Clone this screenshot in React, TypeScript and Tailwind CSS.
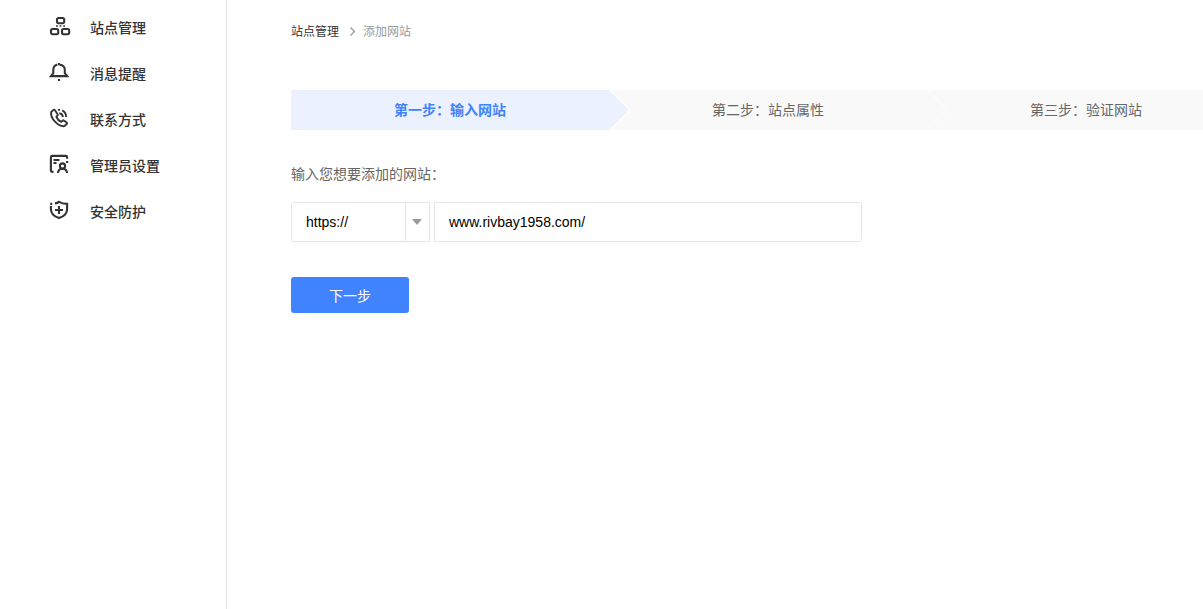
import type { ReactNode } from "react";

function Icon({ children }: { children: ReactNode }) {
  return (
    <svg
      width="24"
      height="24"
      viewBox="0 0 24 24"
      fill="none"
      stroke="#333"
      strokeWidth="2.1"
      className="shrink-0"
    >
      {children}
    </svg>
  );
}

const SitesIcon = () => (
  <Icon>
    <rect x="9" y="4" width="7.200" height="5.200" rx="1.600" />
    <rect x="3" y="15" width="7.200" height="5.200" rx="1.600" />
    <rect x="14" y="15" width="7.200" height="5.200" rx="1.600" />
    <path d="M8 12h1.800M11.600 12h1.800M15.200 12H17" strokeWidth="1.600" />
  </Icon>
);

const BellIcon = () => (
  <Icon>
    <path d="M9.300 4.600C6.800 5.400 5.300 7.400 5.300 10v3.200L3 16.100h16.200l-2.400-2.900V10c0-3-1.900-5-5-5.300" />
    <path d="M11 3v2.200M11 19v2" />
  </Icon>
);

const PhoneIcon = () => (
  <Icon>
    <g strokeWidth="1.900">
      <path d="M5.400 3.900 3.200 6c-.7 3 .9 6.600 3.800 9.600 3 3 6.500 5 9.400 4.500l2.500-2.300c.3-.4.2-.9-.2-1.200l-2.900-2.100c-.4-.3-.9-.2-1.200.1l-1.400 1.300c-2.300-1-3.900-2.700-4.800-5l1.200-1.400c.3-.3.3-.8 0-1.200L6.800 4c-.4-.5-1-.5-1.400-.1Z" />
      <path d="M10 3.900h2M14.200 4.300c2.300 1 3.800 2.900 4 6.700M11.300 7.300c2.100.2 3.300 1.500 3.600 3.700" />
    </g>
  </Icon>
);

const AdminIcon = () => (
  <Icon>
    <path d="M5.500 19.900H4.200c-.8 0-1.300-.5-1.300-1.300V5.200c0-.8.5-1.300 1.300-1.300h13.600c.8 0 1.300.5 1.300 1.300v1.600M19.100 9v2" />
    <path d="M5.500 8h6M5.500 11h3" />
    <circle cx="14.500" cy="14" r="2.600" />
    <path d="M9.900 21c.3-2.800 1.700-4.300 4.600-4.300s4.300 1.500 4.600 4.300" />
  </Icon>
);

const ShieldIcon = () => (
  <Icon>
    <path d="M7 5.400c1.700-.2 3-.7 4-1.500 2.100 1.300 4.700 2 8.100 2v5c0 4.300-3.100 7.500-8.100 9.200-5-1.700-8.100-4.900-8.100-9.200V8" />
    <path d="M2.200 5.900h2M11 8v8M7 12h8" />
  </Icon>
);

const menu = [
  { label: "站点管理", icon: <SitesIcon /> },
  { label: "消息提醒", icon: <BellIcon /> },
  { label: "联系方式", icon: <PhoneIcon /> },
  { label: "管理员设置", icon: <AdminIcon /> },
  { label: "安全防护", icon: <ShieldIcon /> },
];

const steps = ["第一步：输入网站", "第二步：站点属性", "第三步：验证网站"];

export default function App() {
  return (
    <div className="flex h-[609px] w-full overflow-hidden bg-white font-['Liberation_Sans','Noto_Sans_CJK_SC',sans-serif] text-sm text-[#333]">
      <aside className="w-[227px] shrink-0 border-r border-[#e6e6e6] pt-[5px]">
        <nav>
          {menu.map((item) => (
            <a key={item.label} className="flex h-[46px] items-start pt-[9px] pl-12 font-medium">
              <span className="h-6 w-[42px]">{item.icon}</span>
              <span className="leading-7">{item.label}</span>
            </a>
          ))}
        </nav>
      </aside>

      <main className="min-w-0 grow pt-5 pl-16">
        <div className="flex h-6 items-center text-xs">
          <span>站点管理</span>
          <svg width="24" height="12" viewBox="0 0 24 12" fill="none" stroke="#999" strokeWidth="1.300">
            <path d="m11.500 1.500 4 4-4 4" />
          </svg>
          <span className="text-[#999]">添加网站</span>
        </div>

        <ol className="mt-[46px] flex h-10 w-[956px]">
          {steps.map((step, i) => (
            <li
              key={step}
              className={
                i === 0
                  ? "relative z-10 flex w-[318px] shrink-0 items-center justify-center bg-[#ebf1ff] font-bold text-[#4182ff]"
                  : "relative flex w-[318px] shrink-0 items-center justify-center bg-[#f9f9f9] text-[#666]"
              }
            >
              <span>{step}</span>
              {i < 2 && (
                <svg
                  className="absolute top-0 left-full z-10"
                  width="22"
                  height="40"
                  viewBox="0 0 22 40"
                >
                  <path d="M-.5 0H0l20 20L0 40h-.5Z" fill={i === 0 ? "#ebf1ff" : "#f9f9f9"} />
                  <path d="m.5 0 20 20-20 20" fill="none" stroke="#fff" strokeWidth="1" />
                </svg>
              )}
            </li>
          ))}
        </ol>

        <p className="mt-[34px] leading-5 text-[#666]">输入您想要添加的网站：</p>

        <form className="mt-[18px]">
          <div className="flex h-10 gap-1 text-black">
            <div className="flex w-[139px] rounded-l-[3px] border border-[#e6e6e6]">
              <span className="flex grow items-center pl-3.5">https://</span>
              <span className="flex w-6 items-center border-l border-[#e6e6e6] pl-1.5">
                <svg width="10" height="6" viewBox="0 0 10 6" fill="#999">
                  <path d="M0 0h10L5 6Z" />
                </svg>
              </span>
            </div>
            <div className="flex w-[428px] items-center rounded-r-[3px] border border-[#e6e6e6] pl-3.5">
              www.rivbay1958.com/
            </div>
          </div>
          <button
            type="button"
            className="mt-[35px] h-9 w-[118px] rounded-[3px] bg-[#4182ff] pt-px text-white"
          >
            下一步
          </button>
        </form>
      </main>
    </div>
  );
}
